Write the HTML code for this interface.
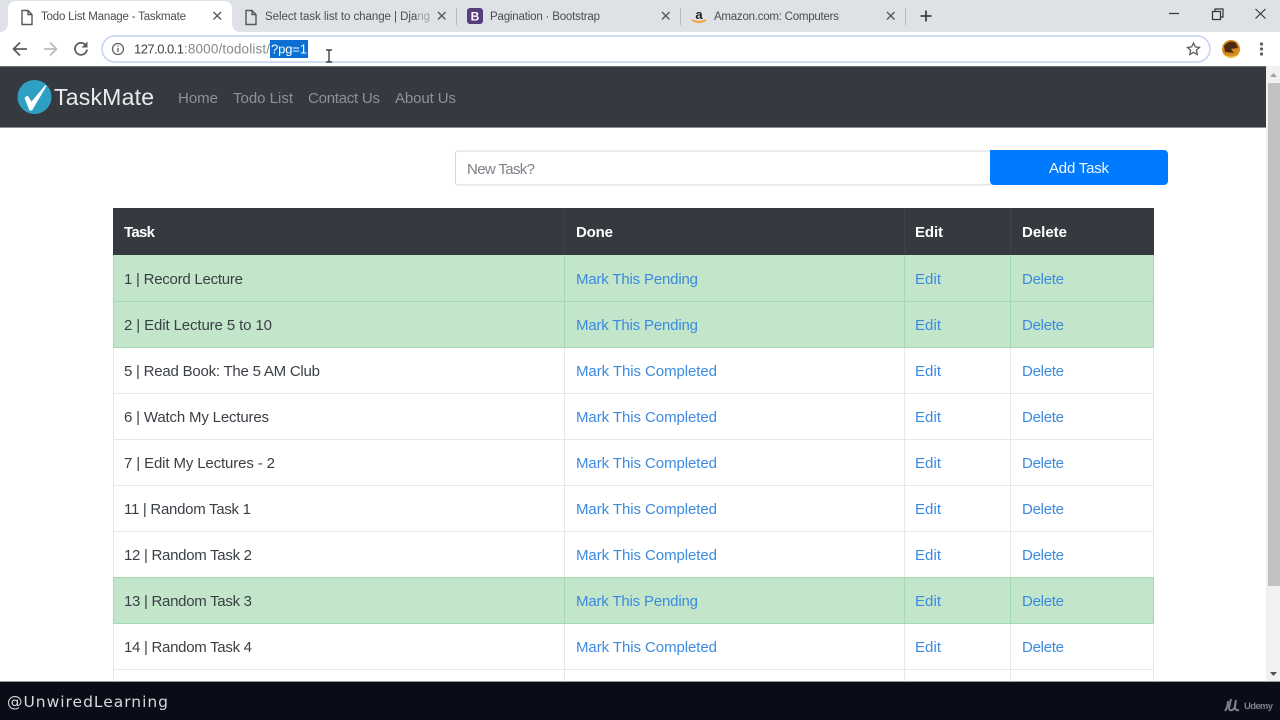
<!DOCTYPE html>
<html><head><meta charset="utf-8"><title>Todo List Manage - Taskmate</title>
<style>
html,body{margin:0;padding:0;width:1280px;height:720px;overflow:hidden;background:#fff}
svg{display:block;filter:blur(.3px)}
text{font-family:"Liberation Sans",sans-serif;font-size:15px}
.tab{font-size:11.5px;fill:#4a4d52}
.nav{font-size:15px;fill:#8e9195}
.c{fill:#3a3f45}
.l{fill:#3b8ae0}
.h{fill:#fff;font-weight:bold}
.x{stroke:#55585c;stroke-width:1.4;fill:none}
</style></head><body>
<svg width="1280" height="720" viewBox="0 0 1280 720" xmlns="http://www.w3.org/2000/svg">
<rect width="1280" height="32" fill="#dee1e6"/>
<path d="M0 32 Q7 32 8 24 V8 Q9 1 16 1 H224 Q231 1 232 8 V24 Q233 32 240 32Z" fill="#fff"/>
<path class="x" d="M22 10.5h6l4 4v10h-10z M28 10.5v4h4" stroke-width="1.1"/>
<text class="tab" x="41" y="20" textLength="145">Todo List Manage - Taskmate</text>
<path class="x" d="M213.500 12l7.500 7.500M221 12l-7.500 7.500"/>
<path class="x" d="M246 10.500h6l4 4v10h-10z M252 10.500v4h4" stroke-width="1.100"/>
<text class="tab" x="265" y="20" textLength="165">Select task list to change | Djang</text>
<rect x="418" y="8" width="16" height="16" fill="#dee1e6" opacity=".55"/>
<path class="x" d="M438 12l7.500 7.500M445.500 12l-7.500 7.500"/>
<rect x="456" y="8" width="1" height="17" fill="#b5b8bd"/>
<rect x="467" y="8" width="16" height="16" rx="3" fill="#563d7c"/>
<text x="475" y="20.500" text-anchor="middle" style="font-size:12px;font-weight:bold;fill:#fff">B</text>
<text class="tab" x="490" y="20" textLength="110">Pagination · Bootstrap</text>
<path class="x" d="M662 12l7.500 7.500M669.500 12l-7.500 7.500"/>
<rect x="680" y="8" width="1" height="17" fill="#b5b8bd"/>
<text x="699" y="19" text-anchor="middle" style="font-size:13px;font-weight:bold;fill:#222">a</text>
<path d="M692 20q7 4 14 0" stroke="#f79c1d" stroke-width="1.800" fill="none"/>
<text class="tab" x="714" y="20" textLength="125">Amazon.com: Computers</text>
<path class="x" d="M887 12l7.500 7.500M894.500 12l-7.500 7.500"/>
<rect x="905" y="8" width="1" height="17" fill="#b5b8bd"/>
<path d="M926 10.500v11M920.500 16h11" stroke="#3c3f43" stroke-width="1.800" fill="none"/>
<path d="M1169 13.500h10" stroke="#333" stroke-width="1.200"/>
<path d="M1212.500 11.500h8v8h-8z M1215 11.500v-2.500h8v8h-2.500" stroke="#333" stroke-width="1.200" fill="#dee1e6"/>
<path d="M1255.500 9l10 9.500M1265.500 9l-10 9.500" stroke="#333" stroke-width="1.200"/>

<rect y="32" width="1280" height="34" fill="#fff"/>
<path d="M27 49H14M20 42.500l-6.500 6.500 6.500 6.500" stroke="#5a5d61" stroke-width="1.800" fill="none"/>
<path d="M57 49H44M50 42.500l6.500 6.500-6.500 6.500" stroke="#b9bcc0" stroke-width="1.800" fill="none"/>
<path d="M86 45.500a6 6 0 1 0 1 4" stroke="#5a5d61" stroke-width="1.800" fill="none"/>
<path d="M87.500 41.500v6h-6z" fill="#5a5d61"/>
<rect x="102" y="36" width="1108" height="26" rx="13" fill="#fff" stroke="#c3d2f0" stroke-width="1.500"/>
<circle cx="118" cy="49" r="5.500" fill="none" stroke="#5a5d61" stroke-width="1.200"/>
<path d="M118 48v4M118 45.500v1.300" stroke="#5a5d61" stroke-width="1.300"/>
<text x="134" y="53.500" textLength="50" style="font-size:13px;fill:#3f4246">127.0.0.1</text>
<text x="184" y="53.500" textLength="86" style="font-size:13.500px;fill:#85888c">:8000/todolist/</text>
<rect x="270" y="40" width="38" height="18" fill="#0a6fd0"/>
<text x="271" y="53.500" textLength="36" style="font-size:13px;fill:#fff">?pg=1</text>
<path d="M326 50h6M329 50v12M326 62h6" stroke="#222" stroke-width="1.200" fill="none"/>
<path d="M1193.500 43l1.800 3.900 4.200.5-3.100 2.900.8 4.200-3.700-2.100-3.700 2.100.8-4.200-3.100-2.900 4.200-.5z" fill="none" stroke="#5a5d61" stroke-width="1.300"/>
<circle cx="1231" cy="49" r="9" fill="#d68a1c"/>
<path d="M1224 46q6-7 12-3l2 5-7 1 3 4-9-1z" fill="#4a2a12"/>
<path d="M1225 55q6 3 12 0l-2 2.500h-8z" fill="#e9d44a"/>
<circle cx="1261.500" cy="44" r="1.600" fill="#5a5d61"/><circle cx="1261.500" cy="49" r="1.600" fill="#5a5d61"/><circle cx="1261.500" cy="54" r="1.600" fill="#5a5d61"/>

<rect y="66" width="1266" height="616" fill="#fff"/>
<rect y="66" width="1266" height="62" fill="#343a40"/>
<rect y="66" width="1266" height="1" fill="#6b6e72"/>
<rect y="127" width="1266" height="1" fill="#8b8e92"/>
<circle cx="34.500" cy="97" r="17" fill="#2ea0c4"/>
<path d="M24.500 98L27.500 95.500 31.500 101.500 45.500 85 46.500 86 32 110.500 29.500 110.500Z" fill="#fff"/>
<text x="54" y="105" textLength="100" style="font-size:23px;fill:#e9ebed">TaskMate</text>
<text class="nav" x="178" y="103" textLength="40">Home</text>
<text class="nav" x="233" y="103" textLength="60">Todo List</text>
<text class="nav" x="308" y="103" textLength="72">Contact Us</text>
<text class="nav" x="395" y="103" textLength="61">About Us</text>

<rect x="455.500" y="151" width="536" height="34" rx="3" fill="#fff" stroke="#d6d9dc"/>
<text x="467" y="174" textLength="68" style="fill:#7b8186">New Task?</text>
<path d="M990 150h174a4 4 0 0 1 4 4v27a4 4 0 0 1-4 4H994a4 4 0 0 1-4-4z" fill="#007bff"/>
<text x="1049" y="173" textLength="60" style="fill:#f2f8ff">Add Task</text>

<rect x="113" y="208" width="1041" height="47" fill="#343a40"/>
<path d="M564.500 208v47M904.500 208v47M1010.500 208v47" stroke="#3d444b"/>
<text class="h" x="124" y="237" textLength="31">Task</text>
<text class="h" x="576" y="237" textLength="37">Done</text>
<text class="h" x="915" y="237" textLength="28">Edit</text>
<text class="h" x="1022" y="237" textLength="45">Delete</text>

<rect x="113" y="255" width="1041" height="93" fill="#c3e6cb"/>
<rect x="113" y="578" width="1041" height="46" fill="#c3e6cb"/>
<g stroke="#e6e8ea" fill="none">
<path d="M113 393.500h1041M113 439.500h1041M113 485.500h1041M113 531.500h1041M113 669.500h1041"/>
<path d="M113.500 348v234M564.500 348v334M904.500 348v334M1010.500 348v334M1153.500 348v334M113.500 624v58"/>
</g>
<g stroke="#a3d9b1" fill="none">
<path d="M113 301.500h1041M113 347.500h1041M113 577.500h1041M113 623.500h1041"/>
<path d="M113.500 255v93M564.500 255v93M904.500 255v93M1010.500 255v93M1153.500 255v93M113.500 578v46M564.500 578v46M904.500 578v46M1010.500 578v46M1153.500 578v46"/>
</g>

<text class="c" x="124" y="284" textLength="119">1 | Record Lecture</text>
<text class="l" x="576" y="284" textLength="122">Mark This Pending</text><text class="l" x="915" y="284" textLength="26">Edit</text><text class="l" x="1022" y="284" textLength="42">Delete</text>
<text class="c" x="124" y="330" textLength="148">2 | Edit Lecture 5 to 10</text>
<text class="l" x="576" y="330" textLength="122">Mark This Pending</text><text class="l" x="915" y="330" textLength="26">Edit</text><text class="l" x="1022" y="330" textLength="42">Delete</text>
<text class="c" x="124" y="376" textLength="196">5 | Read Book: The 5 AM Club</text>
<text class="l" x="576" y="376" textLength="141">Mark This Completed</text><text class="l" x="915" y="376" textLength="26">Edit</text><text class="l" x="1022" y="376" textLength="42">Delete</text>
<text class="c" x="124" y="422" textLength="145">6 | Watch My Lectures</text>
<text class="l" x="576" y="422" textLength="141">Mark This Completed</text><text class="l" x="915" y="422" textLength="26">Edit</text><text class="l" x="1022" y="422" textLength="42">Delete</text>
<text class="c" x="124" y="468" textLength="151">7 | Edit My Lectures - 2</text>
<text class="l" x="576" y="468" textLength="141">Mark This Completed</text><text class="l" x="915" y="468" textLength="26">Edit</text><text class="l" x="1022" y="468" textLength="42">Delete</text>
<text class="c" x="124" y="514" textLength="127">11 | Random Task 1</text>
<text class="l" x="576" y="514" textLength="141">Mark This Completed</text><text class="l" x="915" y="514" textLength="26">Edit</text><text class="l" x="1022" y="514" textLength="42">Delete</text>
<text class="c" x="124" y="560" textLength="128">12 | Random Task 2</text>
<text class="l" x="576" y="560" textLength="141">Mark This Completed</text><text class="l" x="915" y="560" textLength="26">Edit</text><text class="l" x="1022" y="560" textLength="42">Delete</text>
<text class="c" x="124" y="606" textLength="128">13 | Random Task 3</text>
<text class="l" x="576" y="606" textLength="122">Mark This Pending</text><text class="l" x="915" y="606" textLength="26">Edit</text><text class="l" x="1022" y="606" textLength="42">Delete</text>
<text class="c" x="124" y="652" textLength="128">14 | Random Task 4</text>
<text class="l" x="576" y="652" textLength="141">Mark This Completed</text><text class="l" x="915" y="652" textLength="26">Edit</text><text class="l" x="1022" y="652" textLength="42">Delete</text>

<rect x="1266" y="66" width="14" height="616" fill="#f1f1f1"/>
<rect x="1268" y="83" width="12" height="503" fill="#c1c1c1"/>
<path d="M1273.500 73l-3.500 4h7z" fill="#a3a3a3"/>
<path d="M1270 672h7l-3.500 4z" fill="#505050"/>

<rect y="681" width="1280" height="1" fill="#9a9b9f"/>
<rect y="682" width="1280" height="38" fill="#0a0c18"/>
<text x="7" y="707" textLength="161" style="font-family:'DejaVu Sans',sans-serif;font-size:15.500px;fill:#d8d9dc">@UnwiredLearning</text>
<path d="M1225 711q3-4 3-10M1231 699l-2 9q0 3 3 2t3-5l1-5M1236 700l-1 7q0 4 4 3" fill="none" stroke="#7d8086" stroke-width="2"/>
<text x="1244" y="709" textLength="29" style="font-size:9.500px;font-weight:bold;fill:#7d8086">Udemy</text>
</svg>
</body></html>
